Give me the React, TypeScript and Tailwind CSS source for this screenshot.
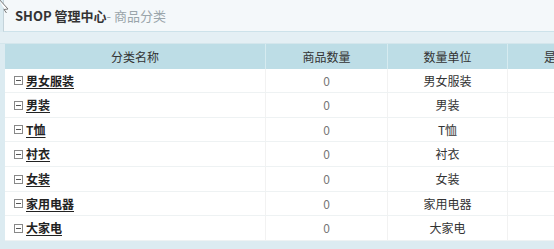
import React from "react";

const rows = [
  { name: "男女服装", unit: "男女服装", h: 24 },
  { name: "男装", unit: "男装", h: 25 },
  { name: "T恤", unit: "T恤", h: 24 },
  { name: "衬衣", unit: "衬衣", h: 25 },
  { name: "女装", unit: "女装", h: 25 },
  { name: "家用电器", unit: "家用电器", h: 24 },
  { name: "大家电", unit: "大家电", h: 25 },
];

function MinusBox() {
  return (
    <svg width="9" height="9" viewBox="0 0 9 9" className="shrink-0">
      <rect x="0.5" y="0.5" width="8" height="8" fill="#fff" stroke="#888" />
      <line x1="2" y1="4.5" x2="7" y2="4.5" stroke="#555" />
    </svg>
  );
}

export default function App() {
  return (
    <div
      className="relative w-[554px] h-[249px] overflow-hidden bg-[#dcebf1] text-[12px] text-[#333]"
      style={{ fontFamily: '"Noto Sans CJK SC", "Noto Sans", sans-serif' }}
    >
      <svg width="10" height="14" viewBox="0 0 10 14" className="absolute left-0 top-0 z-10">
        <path d="M-2 -2 L8 9 L4 9.5 L6.5 13" fill="#fff" stroke="#777" strokeWidth="1" />
      </svg>
      <div className="h-[32px] flex items-center bg-[#f4f8fa] border-b border-[#cde2ea] pl-[14px] ml-[3px] border-l border-l-[#c4d3da] -mt-0">
        <span className="font-bold text-[13px] text-[#333] -ml-[3px]">SHOP 管理中心</span>
        <span className="text-[13px] text-[#9aa5aa]">- 商品分类</span>
      </div>
      <div className="h-[12px] bg-[#e4eff4] border-b border-[#d4e6ec]" />
      <div className="pl-[5px]">
        <div className="w-[700px] bg-white">
          <div className="flex h-[25px] bg-[#bddde6] text-[#333]">
            <div className="w-[261px] flex items-center justify-center border-r border-[#d6ebf0]">分类名称</div>
            <div className="w-[122px] flex items-center justify-center border-r border-[#d6ebf0]">商品数量</div>
            <div className="w-[120px] flex items-center justify-center border-r border-[#d6ebf0]">数量单位</div>
            <div className="w-[120px] flex items-center justify-center">是否显示</div>
          </div>
          {rows.map((r, i) => (
            <div
              key={i}
              className="flex border-b border-[#eef2f3]"
              style={{ height: r.h }}
            >
              <div className="w-[261px] flex items-center pl-[9px] gap-[3px] border-r border-[#f2f2f2]">
                <MinusBox />
                <span className="font-bold underline text-[#222] underline-offset-2">{r.name}</span>
              </div>
              <div className="w-[122px] flex items-center justify-center border-r border-[#f2f2f2] text-[#777]">0</div>
              <div className="w-[120px] flex items-center justify-center border-r border-[#f2f2f2] text-[#333]">{r.unit}</div>
              <div className="w-[120px]" />
            </div>
          ))}
        </div>
      </div>
    </div>
  );
}
